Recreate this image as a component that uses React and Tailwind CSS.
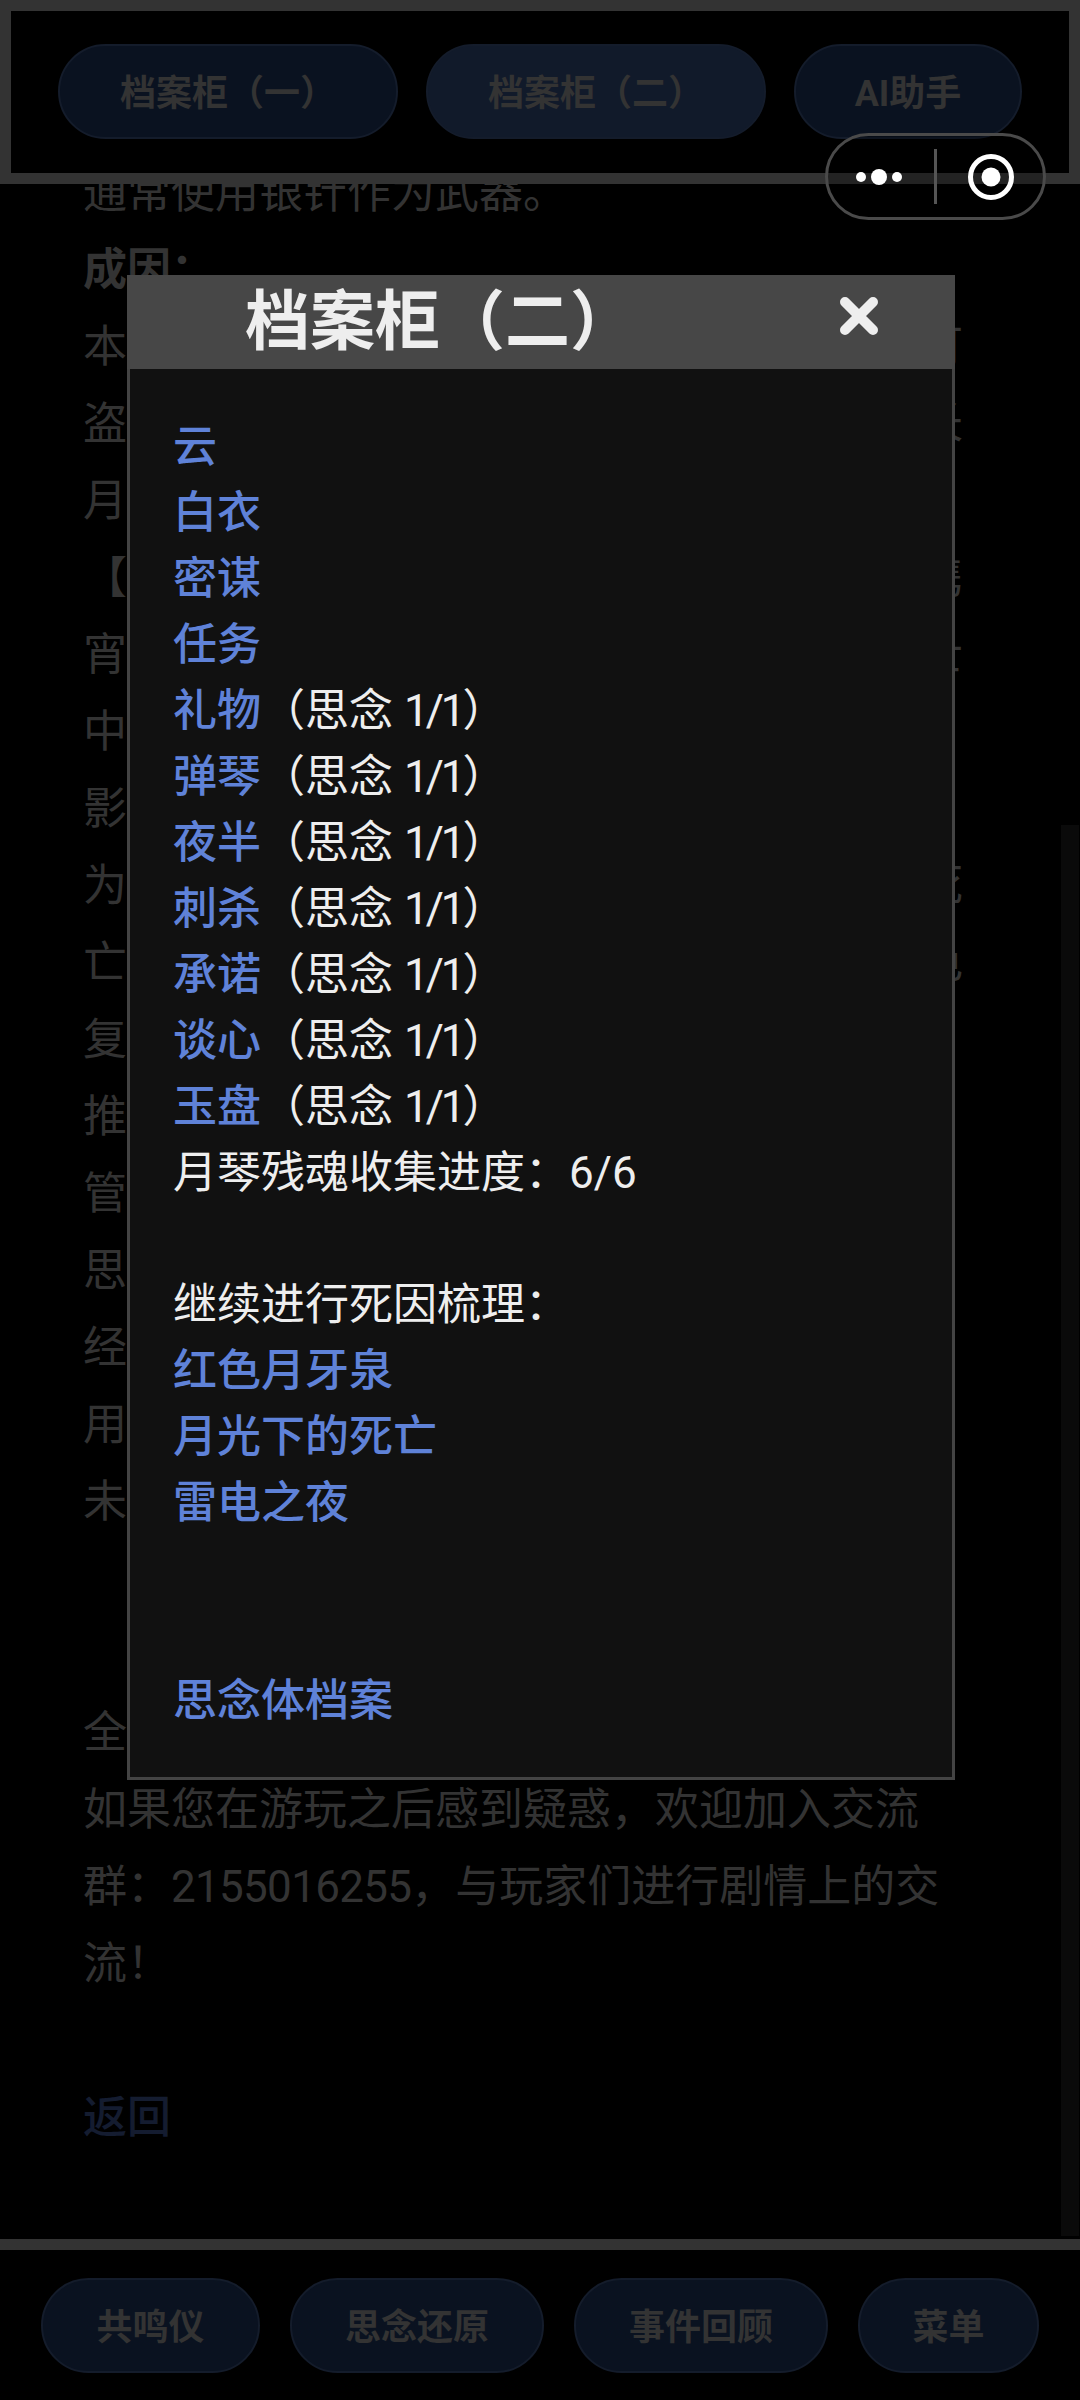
const topTabs = [
  { label: "档案柜（一）", width: "w-[340px]", fill: "bg-[#0a1220]" },
  { label: "档案柜（二）", width: "w-[340px]", fill: "bg-[#111a2a]" },
  { label: "AI助手", width: "w-[228px]", fill: "bg-[#0a1220]" },
];

const bottomTabs = [
  { label: "共鸣仪", width: "w-[219px]" },
  { label: "思念还原", width: "w-[254px]" },
  { label: "事件回顾", width: "w-[254px]" },
  { label: "菜单", width: "w-[181px]" },
];

// only what the dialog leaves uncovered is readable: first and last glyph
const coveredRows = [
  ["本", "可"],
  ["盗", "长"],
  ["月", ""],
  ["【", "携"],
  ["宵", "士"],
  ["中", ""],
  ["影", ""],
  ["为", "死"],
  ["亡", "色"],
  ["复", ""],
  ["推", ""],
  ["管", ""],
  ["思", ""],
  ["经", ""],
  ["用", ""],
  ["未", ""],
  ["", ""],
  ["", ""],
  ["全", ""],
];

const clueRows = [
  { name: "云" },
  { name: "白衣" },
  { name: "密谋" },
  { name: "任务" },
  { name: "礼物", counted: true },
  { name: "弹琴", counted: true },
  { name: "夜半", counted: true },
  { name: "刺杀", counted: true },
  { name: "承诺", counted: true },
  { name: "谈心", counted: true },
  { name: "玉盘", counted: true },
];

function NavTab({ label, width, fill }) {
  return (
    <div
      className={`${width} ${fill} h-[95px] shrink-0 rounded-[48px] border-2 border-[#141c2b] pt-[5px] flex items-center justify-center text-[36px] font-bold text-[#333333]`}
    >
      {label}
    </div>
  );
}

function Capsule() {
  return (
    <div className="absolute z-20 left-[825px] top-[133px] w-[221px] h-[87px] rounded-[44px] border-[3px] border-[#4a4a4a] bg-black/30 flex items-center">
      <svg width="215" height="81" viewBox="0 0 215 81" fill="none">
        <circle cx="33" cy="41" r="5" fill="#fff" />
        <circle cx="51" cy="41" r="8" fill="#fff" />
        <circle cx="69" cy="41" r="5" fill="#fff" />
        <rect x="106" y="13" width="3" height="55" fill="#555" />
        <circle cx="163" cy="41" r="20.5" stroke="#fff" strokeWidth="5" />
        <circle cx="163" cy="41" r="9.5" fill="#fff" />
      </svg>
    </div>
  );
}

function Dialog() {
  return (
    <div className="absolute z-20 left-[127px] top-[275px] w-[828px] flex flex-col">
      <div className="h-[94px] bg-[#474747] pl-[118px] pr-[77px] flex items-center justify-between">
        <span className="text-[65px] leading-[94px] font-bold text-[#eeeeee]">
          档案柜（二）
        </span>
        <svg className="mb-[12px]" width="38" height="38" viewBox="0 0 38 38" fill="none">
          <path
            d="M5 5 33 33M33 5 5 33"
            stroke="#eeeeee"
            strokeWidth="10"
            strokeLinecap="round"
          />
        </svg>
      </div>
      <div className="bg-[#111111] border-x-[3px] border-b-[3px] border-[#444444] pl-[43px] pt-[45px] pb-[43px] text-[44px] leading-[66px] text-[#eeeeee]">
        {clueRows.map((row) => (
          <div key={row.name} className="h-[66px]">
            <span className="font-medium text-[#5f82d8]">{row.name}</span>
            {row.counted && (
              <>
                （思念 <span className="tracking-[-3px]">1/1</span>）
              </>
            )}
          </div>
        ))}
        <div className="h-[66px]">月琴残魂收集进度：6/6</div>
        <div className="h-[66px]" />
        <div className="h-[66px]">继续进行死因梳理：</div>
        <div className="h-[66px] font-medium text-[#5f82d8]">红色月牙泉</div>
        <div className="h-[66px] font-medium text-[#5f82d8]">月光下的死亡</div>
        <div className="h-[66px] font-medium text-[#5f82d8]">雷电之夜</div>
        <div className="h-[132px]" />
        <div className="h-[66px] font-medium text-[#5f82d8]">思念体档案</div>
      </div>
    </div>
  );
}

export default function App() {
  return (
    <div className="relative w-[1080px] h-[2400px] overflow-hidden bg-black flex flex-col font-['Roboto','Noto_Sans_CJK_SC',sans-serif]">
      <div className="h-[184px] shrink-0 border-[11px] border-[#333333] pl-[47px] pt-[33px] flex gap-[28px] items-start bg-black z-10">
        {topTabs.map((tab) => (
          <NavTab key={tab.label} {...tab} />
        ))}
      </div>

      <div className="flex-1 min-h-0 overflow-hidden relative">
        <div className="w-[880px] ml-[83px] -mt-[29px] text-[44px] leading-[77px] text-[#333333]">
          <div>通常使用银针作为武器。</div>
          <div className="font-bold">成因：</div>
          {coveredRows.map(([first, last], i) => (
            <div key={i} className="h-[77px] flex justify-between">
              <span>{first}</span>
              <span>{last}</span>
            </div>
          ))}
          <div>如果您在游玩之后感到疑惑，欢迎加入交流</div>
          <div>
            群：<span className="tracking-[-0.7px]">2155016255</span>，与玩家们进行剧情上的交
          </div>
          <div>流！</div>
          <div className="h-[77px]" />
          <div className="font-medium text-[#141c30]">返回</div>
        </div>
        <div className="absolute right-[1px] top-[641px] bottom-[3px] w-[18px] bg-[#0a0a0a]" />
      </div>

      <div className="h-[161px] shrink-0 border-t-[11px] border-[#333333] pl-[41px] pt-[28px] flex gap-[30px] items-start">
        {bottomTabs.map((tab) => (
          <NavTab key={tab.label} {...tab} fill="bg-[#0a1220]" />
        ))}
      </div>

      <Dialog />
      <Capsule />
    </div>
  );
}
